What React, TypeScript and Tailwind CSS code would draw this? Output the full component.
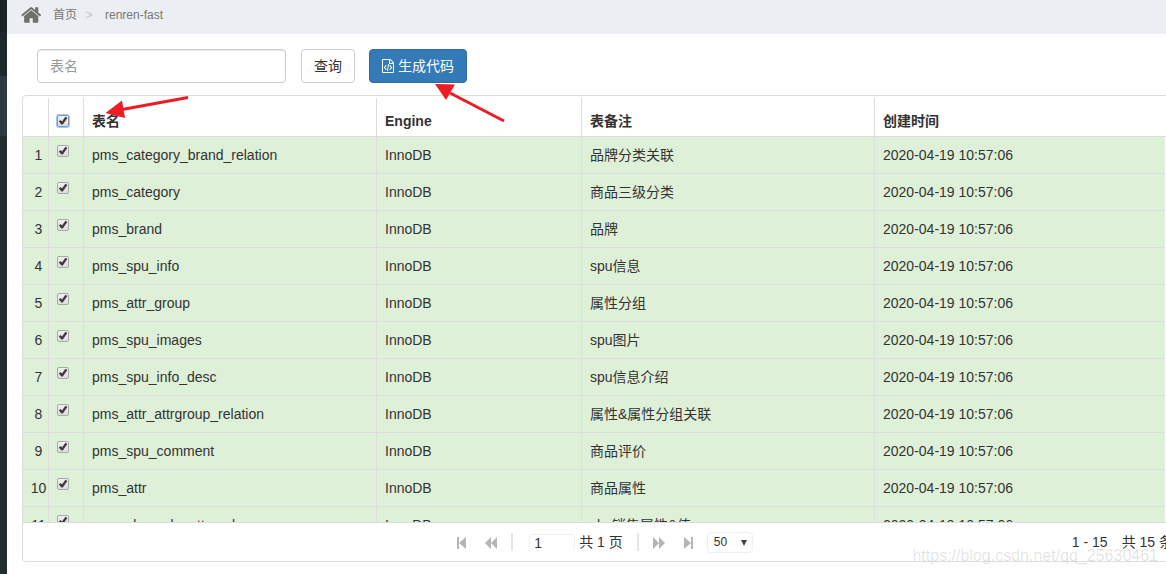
import React, { useState } from 'react';

interface TableInfo {
    tableName: string;
    engine: string;
    tableComment: string;
    createTime: string;
}

const CREATED = '2020-04-19 10:57:06';

const tables: TableInfo[] = [
    { tableName: 'pms_category_brand_relation', engine: 'InnoDB', tableComment: '品牌分类关联', createTime: CREATED },
    { tableName: 'pms_category', engine: 'InnoDB', tableComment: '商品三级分类', createTime: CREATED },
    { tableName: 'pms_brand', engine: 'InnoDB', tableComment: '品牌', createTime: CREATED },
    { tableName: 'pms_spu_info', engine: 'InnoDB', tableComment: 'spu信息', createTime: CREATED },
    { tableName: 'pms_attr_group', engine: 'InnoDB', tableComment: '属性分组', createTime: CREATED },
    { tableName: 'pms_spu_images', engine: 'InnoDB', tableComment: 'spu图片', createTime: CREATED },
    { tableName: 'pms_spu_info_desc', engine: 'InnoDB', tableComment: 'spu信息介绍', createTime: CREATED },
    { tableName: 'pms_attr_attrgroup_relation', engine: 'InnoDB', tableComment: '属性&属性分组关联', createTime: CREATED },
    { tableName: 'pms_spu_comment', engine: 'InnoDB', tableComment: '商品评价', createTime: CREATED },
    { tableName: 'pms_attr', engine: 'InnoDB', tableComment: '商品属性', createTime: CREATED },
    { tableName: 'pms_sku_sale_attr_value', engine: 'InnoDB', tableComment: 'sku销售属性&值', createTime: CREATED },
];

const HomeIcon: React.FC = () => (
    <svg viewBox="0 0 1792 1792" className="h-[22px] w-[22px]" fill="currentColor">
        <path d="M1408 992v480q0 26-19 45t-45 19h-384v-384h-256v384h-384q-26 0-45-19t-19-45v-480q0-1 .5-3t.5-3l575-474 575 474q1 2 1 6zm223-69l-62 74q-8 9-21 11h-3q-13 0-21-7l-692-577-692 577q-12 8-24 7-13-2-21-11l-62-74q-8-10-7-23.5t11-21.5l719-599q32-26 76-26t76 26l244 204v-195q0-14 9-23t23-9h192q14 0 23 9t9 23v408l219 182q10 8 11 21.5t-7 23.5z" />
    </svg>
);

const FileCodeIcon: React.FC = () => (
    <svg viewBox="0 0 1536 1792" className="h-3.5 w-3" fill="currentColor">
        <path d="M1468 380q28 28 48 76t20 88v1152q0 40-28 68t-68 28h-1344q-40 0-68-28t-28-68v-1600q0-40 28-68t68-28h896q40 0 88 20t76 48zm-444-244v376h376q-10-29-22-41l-313-313q-12-12-41-22zm384 1528v-1024h-416q-40 0-68-28t-28-68v-416h-768v1536h1280zm-928-896q8-11 21-12.5t24 6.5l51 38q11 8 12.5 21t-6.5 24l-182 243 182 243q8 11 6.5 24t-12.5 21l-51 38q-11 8-24 6.5t-21-12.5l-226-301q-14-19 0-38zm802 301q14 19 0 38l-226 301q-8 11-21 12.5t-24-6.5l-51-38q-11-8-12.5-21t6.5-24l182-243-182-243q-8-11-6.5-24t12.5-21l51-38q11-8 24-6.5t21 12.5zm-620 461q-13-2-20.5-13t-5.5-24l138-831q2-13 13-20.5t24-5.5l63 10q13 2 20.5 13t5.5 24l-138 831q-2 13-13 20.5t-24 5.5z" />
    </svg>
);

const Columns: React.FC = () => (
    <colgroup>
        <col className="w-[26px]" />
        <col className="w-[35px]" />
        <col className="w-[293px]" />
        <col className="w-[205px]" />
        <col className="w-[293px]" />
        <col />
    </colgroup>
);

const Check: React.FC<{ label: string; checked: boolean; focused?: boolean; onChange: () => void }> = ({ label, checked, focused, onChange }) => (
    <span className="relative block h-3 w-3">
        <input
            type="checkbox"
            aria-label={label}
            checked={checked}
            onChange={onChange}
            className={`block h-3 w-3 appearance-none rounded-[2px] border bg-linear-to-b from-[#f0f0f0] to-[#dedede] ${focused ? 'border-[#8496b5] ring-1 ring-[#a3c4fa]' : 'border-[#a9a9a9]'}`}
        />
        {checked && (
            <svg viewBox="0 0 12 12" className="pointer-events-none absolute inset-0 h-3 w-3">
                <path d="M1.8 6.4L3.6 5L5 6.4L8.4 1.8L10.4 3L5.8 9.6H4.4Z" fill="#3c3c3c" />
            </svg>
        )}
    </span>
);

const PagerButton: React.FC<{ label: string; children: React.ReactNode }> = ({ label, children }) => (
    <button type="button" aria-label={label} className="block pt-0.5 text-[#b5b5b5]">
        <svg viewBox="0 0 12 12" className="block h-3 w-3" fill="currentColor">{children}</svg>
    </button>
);

const App: React.FC = () => {
    const [query, setQuery] = useState('');
    const [page, setPage] = useState('1');
    const [selected, setSelected] = useState<string[]>(tables.map(t => t.tableName));

    const allSelected = selected.length === tables.length;
    const toggleAll = () => setSelected(allSelected ? [] : tables.map(t => t.tableName));
    const toggle = (name: string) => setSelected(p => (p.includes(name) ? p.filter(n => n !== name) : [...p, name]));

    return (
        <div className="relative flex min-h-screen overflow-hidden bg-white font-['Liberation_Sans','Noto_Sans_CJK_SC',sans-serif] text-sm text-[#333]">
            <aside className="flex w-[7px] shrink-0 flex-col bg-[#222d32]">
                <div className="h-8 bg-[#1a2226]" />
                <div className="h-11 bg-[#1e282c]" />
                <div className="h-[60px] bg-[#2c3b41]" />
            </aside>

            <main className="min-w-0 flex-1">
                <nav className="flex h-[34px] items-center bg-[#ebeef3] pb-1 pl-3.5 text-xs text-[#777]">
                    <a href="#home" aria-label="Home" className="mr-2.5 text-[#6f6f6f]"><HomeIcon /></a>
                    <a href="#index">首页</a>
                    <span className="w-7 pr-1 text-center text-[#c5c5c5]">&gt;</span>
                    <span>renren-fast</span>
                </nav>

                <section className="pl-[15px] pt-[15px]">
                    <div className="mb-3 flex pl-[15px]">
                        <input
                            type="text"
                            aria-label="表名"
                            placeholder="表名"
                            value={query}
                            onChange={e => setQuery(e.target.value)}
                            className="mr-[15px] h-[34px] w-[249px] rounded border border-[#ccc] px-3 shadow-[inset_0_1px_1px_rgba(0,0,0,0.075)] outline-none placeholder:text-[#999]"
                        />
                        <button type="button" className="mr-3.5 h-[34px] rounded border border-[#ccc] px-3">查询</button>
                        <button type="button" className="flex h-[34px] items-center gap-1 rounded border border-[#2e6da4] bg-[#337ab7] px-3 text-white">
                            <FileCodeIcon />生成代码
                        </button>
                    </div>

                    <div className="-mr-5 rounded border border-[#ddd]">
                        <table className="mt-0.5 w-full table-fixed border-separate border-spacing-0 text-left">
                            <Columns />
                            <thead>
                                <tr className="h-[39px] *:border-b *:border-r *:border-[#ddd] *:px-2 *:pt-2 *:last:border-r-0">
                                    <td />
                                    <th><Check label="Select all" checked={allSelected} focused onChange={toggleAll} /></th>
                                    <th>表名</th>
                                    <th>Engine</th>
                                    <th>表备注</th>
                                    <th>创建时间</th>
                                </tr>
                            </thead>
                        </table>

                        <div className="h-[385px] overflow-hidden pr-5">
                            <table className="w-full table-fixed border-separate border-spacing-0">
                                <Columns />
                                <tbody>
                                    {tables.map((t, i) => (
                                        <tr key={t.tableName} className={`h-[37px] *:border-b *:border-r *:border-[#ddd] *:last:border-r-0 ${selected.includes(t.tableName) ? 'bg-[#dff0d8]' : 'bg-white'}`}>
                                            <td className="pl-1.5 text-center">{i + 1}</td>
                                            <td className="px-2 pb-2"><Check label={t.tableName} checked={selected.includes(t.tableName)} onChange={() => toggle(t.tableName)} /></td>
                                            <td className="px-2">{t.tableName}</td>
                                            <td className="px-2">{t.engine}</td>
                                            <td className="px-2">{t.tableComment}</td>
                                            <td className="px-2">{t.createTime}</td>
                                        </tr>
                                    ))}
                                </tbody>
                            </table>
                        </div>

                        <div className="flex h-[39px] items-center border-t border-[#ddd]">
                            <div className="flex-1 pl-3" />
                            <div className="flex items-center">
                                <div className="flex gap-[18px]">
                                    <PagerButton label="First page"><path d="M2 0h2v12H2zM4 6l7-6v12z" /></PagerButton>
                                    <PagerButton label="Previous page"><path d="M0 6l6-6v12zM6 6l6-6v12z" /></PagerButton>
                                </div>
                                <span className="mx-3.5 h-[18px] w-0.5 bg-[#e5e5e5]" />
                                <input
                                    type="text"
                                    aria-label="Page"
                                    value={page}
                                    onChange={e => setPage(e.target.value)}
                                    className="ml-0.5 h-4 w-[46px] rounded-sm border-x border-t border-[#f0f0f0] px-1 outline-none"
                                />
                                <span className="ml-1 whitespace-nowrap">共 1 页</span>
                                <span className="mx-3.5 h-[18px] w-0.5 bg-[#e5e5e5]" />
                                <div className="flex gap-[18px]">
                                    <PagerButton label="Next page"><path d="M0 0l6 6-6 6zM6 0l6 6-6 6z" /></PagerButton>
                                    <PagerButton label="Last page"><path d="M1 0l7 6-7 6zM8 0h2v12H8z" /></PagerButton>
                                </div>
                                <span className="relative ml-3 block">
                                    <select aria-label="Rows per page" defaultValue="50" className="block h-[21px] w-[46px] appearance-none rounded-sm border border-[#f0f0f0] px-1.5 text-xs outline-none">
                                        <option>10</option>
                                        <option>30</option>
                                        <option>50</option>
                                        <option>100</option>
                                    </select>
                                    <svg viewBox="0 0 6 6" className="pointer-events-none absolute right-1.5 top-2 h-1.5 w-1.5">
                                        <path d="M0 0h6L3 6z" fill="#444" />
                                    </svg>
                                </span>
                            </div>
                            <div className="flex flex-1 justify-end gap-3.5 whitespace-nowrap pr-3">
                                <span>1 - 15</span>
                                <span>共 15 条</span>
                            </div>
                        </div>
                    </div>
                </section>
            </main>

            <svg className="pointer-events-none absolute left-0 top-0 h-[130px] w-[520px]" viewBox="0 0 520 130" fill="#ed1c24">
                <path d="M188 97.5L122 109.5M504 121L450 93" stroke="#ed1c24" strokeWidth="3" />
                <path d="M105.5 113L122 100.5L125 118Z" />
                <path d="M435 84L455 84.5L446 100Z" />
            </svg>
            <span className="pointer-events-none absolute bottom-1.5 right-2 text-base text-black/12">https://blog.csdn.net/qq_25630461</span>
        </div>
    );
};

export default App;
